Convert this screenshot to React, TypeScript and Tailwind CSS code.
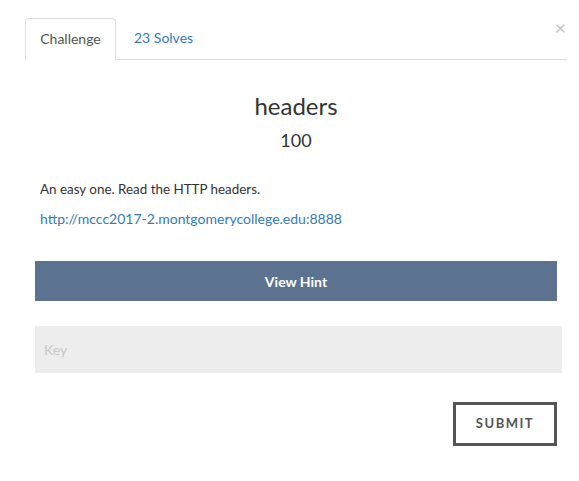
export default function App() {
  return (
    <div className="relative h-[481px] w-[579px] bg-white font-['Lato',sans-serif] text-[#333]">
      <button className="absolute right-[13px] top-[17px] text-[20px] leading-none text-[#c4c4c4]">
        ×
      </button>

      <div className="pl-[25px] pr-[12px] pt-[18px]">
        <div className="flex border-b border-[#ddd]">
          <div className="-mb-px flex h-[42px] w-[91px] items-center justify-center rounded-t-[4px] border border-b-0 border-[#ddd] bg-white pb-[3px] text-[14px] text-[#555]">
            Challenge
          </div>
          <div className="flex h-[41px] items-center px-[18px] pb-[3px] text-[14px] text-[#337ab7]">
            23 Solves
          </div>
        </div>
      </div>

      <div className="flex flex-col">
        <div className="ml-[35px] w-[522px] text-center">
          <h1 className="mt-[32px] text-[24px] leading-[28px] text-[#333]">headers</h1>
          <h2 className="mt-[10px] text-[18px] leading-[20px] text-[#333]">100</h2>
        </div>

        <p className="ml-[40px] mt-[30px] text-[13.4px] leading-[18px] text-[#333]">
          An easy one. Read the HTTP headers.
        </p>
        <a
          href="#"
          className="ml-[40px] mt-[11px] w-fit text-[14px] leading-[20px] text-[#337ab7]"
        >
          http://mccc2017-2.montgomerycollege.edu:8888
        </a>

        <button className="ml-[35px] mt-[32px] h-[40px] w-[522px] bg-[#5c7291] text-[14px] font-bold text-white">
          View Hint
        </button>

        <input
          placeholder="Key"
          className="ml-[35px] mt-[25px] h-[47px] w-[527px] bg-[#ededed] px-[9px] text-[14px] text-[#333] outline-none placeholder:text-[#c8c8c8]"
        />

        <div className="mt-[29px] flex justify-end pr-[22px]">
          <button className="h-[44px] w-[104px] border-[3px] border-[#555] bg-white text-[13px] font-bold tracking-[1.5px] text-[#555]">
            SUBMIT
          </button>
        </div>
      </div>
    </div>
  );
}
